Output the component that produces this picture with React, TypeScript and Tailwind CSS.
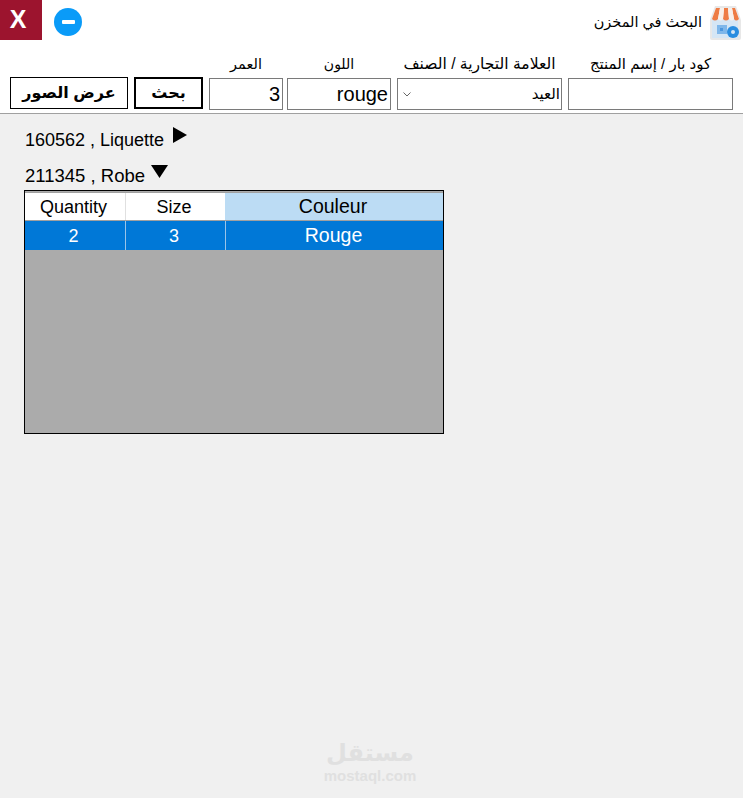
export default function App() {
  return (
    <div className="w-[743px] h-[798px] bg-[#f0f0f0] relative overflow-hidden text-black font-['Liberation_Sans','DejaVu_Sans',sans-serif]">
      <header className="h-[114px] bg-white border-b border-[#a0a0a0] flex flex-col">
        <div className="h-[45px] flex items-start">
          <div className="w-[42px] h-[40px] bg-[#9c142e] flex items-center justify-center text-white font-bold text-[25px] pr-[6px]">X</div>
          <div className="ml-[12px] mt-[8px] w-[28px] h-[28px] rounded-full bg-[#0a9bf8] flex items-center justify-center">
            <div className="w-[13px] h-[4px] bg-white rounded-[1px]" />
          </div>
          <div className="ml-auto flex items-center h-[44px] pr-[1px]">
            <span dir="rtl" className="text-[14.500px] mr-[6px] mt-[1px]">البحث في المخزن</span>
            <svg width="34" height="36" viewBox="0 0 34 36">
              <path d="M7 2h21l5 14v18a2 2 0 0 1-2 2H4a2 2 0 0 1-2-2V16z" fill="#e8e8e8" />
              <rect x="4" y="14" width="26" height="20" fill="#d5e6f5" />
              <path d="M8 4h19l4 11H4z" fill="#fafafa" />
              <path d="M8 4h4l-2 11q-3 3-6 0zM16 4h4l1 11q-3 3-6 0zM24 4h3l4 11q-3 3-5 0z" fill="#ee7c45" />
              <path d="M10 15q3 3 5 0l1-11h-4zM21 15q3 3 5 0l-2-11h-4z" fill="#f8f0ea" />
              <rect x="9" y="21" width="10" height="9" fill="#7fb7ea" />
              <rect x="12" y="24" width="3" height="3" fill="#4d97de" />
              <circle cx="25" cy="28" r="6" fill="#2a8de0" />
              <circle cx="25" cy="28" r="2" fill="#d5e6f5" />
            </svg>
          </div>
        </div>
        <div dir="rtl" className="flex items-start pr-[10px] mt-[9px]">
          <Field label="كود بار / إسم المنتج" w="w-[165px]" size="text-[15px]" />
          <div className="w-[165px] mr-[6px] flex flex-col items-center">
            <span className="text-[15.600px] leading-[20px] h-[20px] mb-[4px] whitespace-nowrap">العلامة التجارية / الصنف</span>
            <div className="w-full h-[32px] border border-[#7a7a7a] bg-white flex items-center justify-between pr-[1px] pl-[5px] text-[15px]">
              <span>العيد</span>
              <svg width="8" height="5" viewBox="0 0 8 5" className="text-[#666]"><path d="M.5.5 4 4 7.500.5" fill="none" stroke="currentColor" /></svg>
            </div>
          </div>
          <Field label="اللون" w="w-[104px] mr-[6px]" size="text-[14px]" value="rouge" />
          <Field label="العمر" w="w-[74px] mr-[4px]" size="text-[14.500px]" value="3" />
          <button className="mt-[23px] w-[69px] h-[32px] border-2 border-black bg-white font-bold text-[16px] mr-[6px]">بحث</button>
          <button className="mt-[23px] w-[118px] h-[32px] border border-black bg-white font-bold text-[16px] mr-[6px]">عرض الصور</button>
        </div>
      </header>

      <div className="pl-[25px] pt-[13px]">
        <div className="flex items-start h-[36px]">
          <span className="text-[18px] leading-[24px] mt-[1px]">160562 , Liquette</span>
          <svg width="14" height="16" viewBox="0 0 14 16" className="ml-[9px]"><path d="M0 0l14 8-14 8z" fill="#000" /></svg>
        </div>
        <div className="flex items-start h-[27px]">
          <span className="text-[18.500px] leading-[24px] mt-[1px]">211345 , Robe</span>
          <svg width="17" height="13" viewBox="0 0 17 13" className="ml-[6px] mt-[2px]"><path d="M0 0h17l-8.500 13z" fill="#000" /></svg>
        </div>
        <div className="-ml-[1px] w-[420px] h-[244px] border border-black bg-[#ababab] flex flex-col pt-[1px]">
          <div className="flex h-[29px] bg-white text-[18px] border-t border-b border-[#a0a0a0]">
            <div className="w-[101px] border-r border-[#e0e0e0] flex items-center justify-center pt-[1px] pr-[3px]">Quantity</div>
            <div className="w-[99px] flex items-center justify-center pt-[1px] pr-[3px]">Size</div>
            <div className="flex-1 bg-[#bcdcf4] flex items-center justify-center text-[19.500px] pr-[2px]">Couleur</div>
          </div>
          <div className="flex h-[29px] bg-[#0078d7] text-white text-[18px]">
            <div className="w-[101px] border-r border-[#9ac4e8] flex items-center justify-center pt-[1px] pr-[3px]">2</div>
            <div className="w-[100px] border-r border-[#9ac4e8] flex items-center justify-center pt-[1px] pr-[3px]">3</div>
            <div className="flex-1 flex items-center justify-center text-[19.500px] pr-[2px]">Rouge</div>
          </div>
        </div>
      </div>

      <div className="absolute left-[310px] top-[738px] w-[120px] flex flex-col items-center text-[#e0e0e0]">
        <span dir="rtl" className="text-[24px] font-bold leading-[29px] h-[29px]">مستقل</span>
        <span className="text-[15px] font-bold leading-[17px] h-[17px]">mostaql.com</span>
      </div>
    </div>
  );
}

function Field({ label, w, value, size }: { label: string; w: string; value?: string; size: string }) {
  return (
    <div className={`${w} flex flex-col items-center`}>
      <span className={`${size} leading-[20px] h-[20px] mb-[4px] whitespace-nowrap`}>{label}</span>
      <div dir="rtl" className="w-full h-[32px] border border-[#7a7a7a] bg-white flex items-center px-[2px] text-[20px]">
        <span dir="ltr">{value}</span>
      </div>
    </div>
  );
}
